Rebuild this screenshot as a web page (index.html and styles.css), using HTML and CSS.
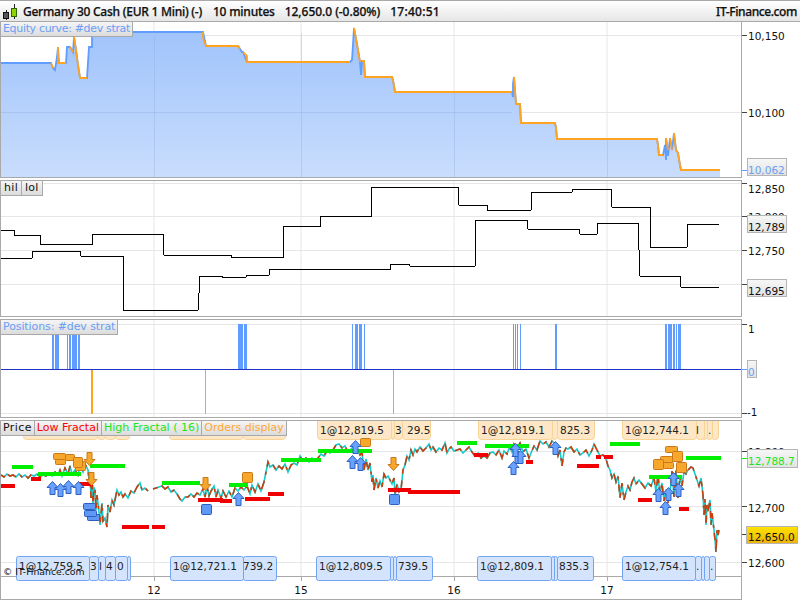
FILE: index.html
```html
<!DOCTYPE html>
<html lang="en">
<head>
<meta charset="utf-8">
<title>Germany 30 Cash</title>
<link rel="stylesheet" href="styles.css">
</head>
<body>
<div class="app">
  <header class="topbar">
    <svg class="logo" width="19" height="21" viewBox="0 0 19 21">
      <path class="logo-wick" d="M6.5 9V19M14.5 3V18"/>
      <rect class="logo-dark" x="3.5" y="11.5" width="5" height="6"/>
      <rect class="logo-green" x="11.5" y="7.5" width="5" height="8"/>
    </svg>
    <span class="instrument">Germany 30 Cash (EUR 1 Mini) (-)</span>
    <span class="period">10 minutes</span>
    <span class="quote">12,650.0 (-0.80%)</span>
    <span class="clock">17:40:51</span>
    <span class="brand">IT-Finance.com</span>
  </header>

  <section class="panel panel-equity">
    <div class="plot">
      <svg class="chart" width="740" height="155" viewBox="1 22 740 155">
        <defs>
          <linearGradient id="eqfill" x1="0" y1="0" x2="0" y2="1">
            <stop offset="0" stop-color="#9fc3fb"/>
            <stop offset="1" stop-color="#c9ddfd"/>
          </linearGradient>
          <linearGradient id="gold" x1="0" y1="0" x2="0" y2="1">
            <stop offset="0" stop-color="#ffe300"/>
            <stop offset="1" stop-color="#eeb20c"/>
          </linearGradient>
          <linearGradient id="pale" x1="0" y1="0" x2="0" y2="1">
            <stop offset="0" stop-color="#f7f7f7"/>
            <stop offset="1" stop-color="#e2e2e2"/>
          </linearGradient>
        </defs>
        <path class="grid" d="M154 22V177M301 22V177M454 22V177M607 22V177M1 35.5H741M1 112.5H741"/>
        <path class="eq-area" fill="url(#eqfill)" d="M1 63H51L53 68 55 70 57 57 58 47 59 63H66L67 47H70L73 52 74 37 76 50 78 65 80 78H87L89 47H92V37L93 32H203L206 46H238L242 52H243L247 62H350L352 60 354 28 358 50 360 62 361 75 362 61H364L365 77H392L393 80 395 92H512L513 77H514L516 104H520L521 123H555L556 128 557 139H657L658 145 659 155H663L665 145 666 160 666 138 668 156 670 138 672 150 674 133 676 150 678 153 680 165 681 170H720V177H1Z"/>
        <path class="grid-over" d="M154.5 36V177M301.5 33V177M454.5 93V177M607.5 139V177M1 112.5H512"/>
        <path class="eq-blue" d="M1 63H51L53 68 55 70 57 57 58 47 59 63H66L67 47H70L73 52 74 37 76 50 78 65 80 78H87L89 47H92V37L93 32H203L206 46H238L242 52H243L247 62H350L352 60 354 28 358 50 360 62 361 75 362 61H364L365 77H392L393 80 395 92H512L513 97V84L514 77L516 104H520L521 123H555L556 128 557 139H657L658 145 659 155H663L665 145 666 160 666 138 668 156 670 138 672 150 674 133 676 150 678 153 680 165 681 170H720"/>
        <path class="eq-orange" d="M51 63L53 68M58 47V63H66M70 47L73 52M74 37L76 50 78 65 80 78H87M203 32V38L206 46H238L240 49M243 52L247 56V62H350M354 28L358 50 360 62M362 61H364L365 77H392L393 80 395 92H512M514 77L516 104H520L521 123H555L556 128 557 139H657L658 145 659 155H663M666 138L668 150M670 138L672 150M674 133L676 150 678 153 680 165 681 170H720"/>
      </svg>
      <div class="legend"><span class="tag tag-blue tag-equity">Equity curve: #dev strat</span></div>
    </div>
    <svg class="axis" width="58" height="155" viewBox="742 22 58 155">
      <path class="tick" d="M742 35.5H747M742 112.5H747"/>
      <text class="axis-text" x="748" y="40">10,150</text>
      <text class="axis-text" x="748" y="117">10,100</text>
      <path class="tick-blue" d="M742 170.5H747"/>
      <rect class="box" fill="url(#pale)" x="747.5" y="158.5" width="39" height="17"/>
      <text class="axis-text value-blue" x="748" y="174">10,062</text>
    </svg>
  </section>

  <section class="panel panel-hl">
    <div class="plot">
      <svg class="chart" width="740" height="135" viewBox="1 181 740 135">
        <path class="grid" d="M154 181V316M301 181V316M454 181V316M607 181V316M1 183.5H741M1 216.5H741M1 250.5H741M1 284.5H741"/>
        <path class="line-black" d="M1 230H14V235H40V244H92V234H163L164 255H231V257H283V226H320V216H371V187H458L459 205H487V210H531L532 192H572L573 189H611L612 207H650L651 247H687L688 224H719"/>
        <path class="line-black" d="M1 258H32L33 251H80L81 256H123L124 310H198L200 276H222V277H246L247 275H269L270 269H390V264H409L410 266H475L476 220H527L528 229H579L580 234H597L598 223H638L640 276H680L681 287H719"/>
      </svg>
      <div class="legend"><span class="tag tag-wide">hil</span><span class="tag tag-wide">lol</span></div>
    </div>
    <svg class="axis" width="58" height="135" viewBox="742 181 58 135">
      <path class="tick" d="M742 183.5H747M742 216.5H747M742 250.5H747M742 284.5H747"/>
      <text class="axis-text" x="748" y="193">12,850</text>
      <text class="axis-text" x="748" y="221">12,800</text>
      <text class="axis-text" x="748" y="255">12,750</text>
      <rect class="box" fill="url(#pale)" x="747.5" y="215.5" width="39" height="17"/>
      <text class="axis-text" x="748" y="231">12,789</text>
      <rect class="box" fill="url(#pale)" x="747.5" y="279.5" width="39" height="17"/>
      <text class="axis-text" x="748" y="295">12,695</text>
    </svg>
  </section>

  <section class="panel panel-pos">
    <div class="plot">
      <svg class="chart" width="740" height="97" viewBox="1 320 740 97">
        <path class="grid" d="M154 320V417M301 320V417M454 320V417M607 320V417M1 324.5H741M1 413.5H741"/>
        <path class="pos-blue" d="M52 324h2v45h-2zM55 324h4v45h-4zM67 324h1v45h-1zM69 324h2v45h-2zM72 324h5v45h-5zM78 324h2v45h-2zM238 324h5v45h-5zM244 324h3v45h-3zM352 324h1v45h-1zM355 324h3v45h-3zM359 324h3v45h-3zM364 324h1v45h-1zM513 324h1v45h-1zM515 324h1v45h-1zM517 324h1v45h-1zM520 324h1v45h-1zM555 324h2v45h-2zM665 324h2v45h-2zM668 324h4v45h-4zM673 324h2v45h-2zM676 324h1v45h-1zM678 324h3v45h-3z"/>
        <path class="pos-orange" d="M91 370h2v44h-2zM205 370h1v44h-1zM393 370h1v44h-1z"/>
        <path class="zero" d="M1 369.5H741"/>
      </svg>
      <div class="legend"><span class="tag tag-blue tag-positions">Positions: #dev strat</span></div>
    </div>
    <svg class="axis" width="58" height="97" viewBox="742 320 58 97">
      <path class="tick" d="M742 324.5H747M742 413.5H747"/>
      <path class="tick-blue" d="M742 369.5H747"/>
      <text class="axis-text" x="748" y="333">1</text>
      <rect class="box" fill="url(#pale)" x="747.5" y="360.5" width="9" height="17"/>
      <text class="axis-text value-blue" x="748" y="376">0</text>
      <text class="axis-text" x="747" y="416">-1</text>
    </svg>
  </section>

  <section class="panel panel-price">
    <div class="plot">
      <svg class="chart" width="740" height="178" viewBox="1 421 740 178">
        <path class="grid" d="M154 421V576M301 421V576M454 421V576M607 421V576M1 451.5H741M1 506.5H741M1 562.5H741"/>
        <path class="axis-rule" d="M1 576.5H741M154.5 576V581M301.5 576V581M454.5 576V581M607.5 576V581"/>

        <g class="order-sell">
          <rect x="115.5" y="415.5" width="14" height="24" rx="3"/><rect x="105.5" y="415.5" width="10" height="24" rx="3"/><rect x="97.5" y="415.5" width="8" height="24" rx="3"/><rect x="23.5" y="415.5" width="74" height="24" rx="3"/>
          <rect x="169.5" y="415.5" width="74" height="24" rx="3"/><rect x="243.5" y="415.5" width="42" height="24" rx="3"/>
          <rect x="402.5" y="415.5" width="28" height="24" rx="3"/><rect x="394.5" y="415.5" width="8" height="24" rx="3"/><rect x="391.5" y="415.5" width="3" height="24" rx="3"/><rect x="317.5" y="415.5" width="74" height="24" rx="3"/>
          <rect x="557.5" y="415.5" width="37" height="24" rx="3"/><rect x="551.5" y="415.5" width="6" height="24" rx="3"/><rect x="478.5" y="415.5" width="74" height="24" rx="3"/>
          <rect x="711.5" y="415.5" width="7" height="24" rx="3"/><rect x="706.5" y="415.5" width="6" height="24" rx="3"/><rect x="701.5" y="415.5" width="6" height="24" rx="3"/><rect x="696.5" y="415.5" width="8" height="24" rx="3"/><rect x="622.5" y="415.5" width="74" height="24" rx="3"/>
        </g>
        <text class="order-text" x="320" y="434">1@12,819.5</text>
        <text class="order-text" x="395" y="434">3</text>
        <text class="order-text" x="407" y="434">29.5</text>
        <text class="order-text" x="481" y="434">1@12,819.1</text>
        <text class="order-text" x="560" y="434">825.3</text>
        <text class="order-text" x="625" y="434">1@12,744.1</text>
        <text class="order-text" x="696" y="434">l</text>
        <text class="order-text" x="708" y="434">.</text>

        <g class="order-buy">
          <rect x="127.5" y="556.5" width="3" height="24" rx="2"/><rect x="115.5" y="556.5" width="12" height="24" rx="2"/><rect x="105.5" y="556.5" width="10" height="24" rx="2"/><rect x="98.5" y="556.5" width="7" height="24" rx="2"/><rect x="89.5" y="556.5" width="9" height="24" rx="2"/><rect x="16.5" y="556.5" width="73" height="24" rx="2"/>
          <rect x="170.5" y="556.5" width="73" height="24" rx="2"/><rect x="243.5" y="556.5" width="33" height="24" rx="2"/>
          <rect x="396.5" y="556.5" width="36" height="24" rx="2"/><rect x="393.5" y="556.5" width="3" height="24" rx="2"/><rect x="390.5" y="556.5" width="3" height="24" rx="2"/><rect x="316.5" y="556.5" width="74" height="24" rx="2"/>
          <rect x="557.5" y="556.5" width="36" height="24" rx="2"/><rect x="553.5" y="556.5" width="4" height="24" rx="2"/><rect x="551.5" y="556.5" width="3" height="24" rx="2"/><rect x="477.5" y="556.5" width="74" height="24" rx="2"/>
          <rect x="709.5" y="556.5" width="6" height="24" rx="2"/><rect x="704.5" y="556.5" width="5" height="24" rx="2"/><rect x="701.5" y="556.5" width="3" height="24" rx="2"/><rect x="695.5" y="556.5" width="6" height="24" rx="2"/><rect x="622.5" y="556.5" width="73" height="24" rx="2"/>
        </g>
        <text class="order-text" x="19" y="570">1@12,759.5</text>
        <text class="order-text" x="90" y="570">3</text>
        <text class="order-text" x="99" y="570">l</text>
        <text class="order-text" x="106" y="570">4</text>
        <text class="order-text" x="117" y="570">0</text>
        <text class="order-text" x="173" y="570">1@12,721.1</text>
        <text class="order-text" x="243" y="570">739.2</text>
        <text class="order-text" x="319" y="570">1@12,809.5</text>
        <text class="order-text" x="398" y="570">739.5</text>
        <text class="order-text" x="480" y="570">1@12,809.1</text>
        <text class="order-text" x="559" y="570">835.3</text>
        <text class="order-text" x="625" y="570">1@12,754.1</text>
        <text class="order-text" x="696" y="570">.</text>
        <text class="order-text" x="710" y="570">.</text>

        <path class="price-teal" d="M1 475 4 477 7 474 10 476 13 475 16 477 19 474 22 477 25 475 28 478 31 475 34 476 37 474 40 477 43 475 46 476 49 473 52 476 55 472 58 475 60 470 62 476 65 468 68 474 70 466 72 474 75 470 78 475 80 466 83 472 85 464 88 470 89 480 90 474 91 498 92 482 93 503 94 488 95 490 96 510 97 495 99 512 100 525 102 503 103 521 105 518 107 527 108 505 110 512 112 500 114 505 117 490 119 495 121 492 123 497 125 494 128 498 131 491 134 493 137 487 140 483 142 490 145 488 148 491 M153 489 156 488 159 487 162 486 165 489 168 487 171 492 174 490 177 494 180 499 182 501 185 497 188 497 191 494 194 497 197 493 200 495 203 489 205 497 207 486 209 496 211 491 214 486 216 497 218 490 221 498 223 491 226 497 229 491 232 497 235 488 238 491 241 487 244 490 247 486 250 494 252 485 255 492 258 484 261 491 264 482 266 472 268 462 270 467 273 465 276 470 279 466 282 469 285 464 288 472 291 465 294 463 297 465 300 456 303 461 306 458 309 462 312 458 315 461 318 458 321 454 324 456 327 451 330 453 333 450 336 445 339 444 342 448 345 446 348 452 351 449 354 446 357 450 360 455 362 452 364 470 366 459 368 470 370 463 372 482 373 475 374 490 376 478 378 488 380 481 382 487 384 474 386 478 388 476 390 480 392 484 394 478 395 495 397 484 399 492 401 490 403 470 405 465 407 456 409 460 411 450 413 455 415 449 417 452 420 447 423 451 426 448 429 444 431 450 433 447 436 452 439 448 442 450 445 443 447 453 449 449 451 447 454 451 457 450 460 449 463 453 466 450 469 447 472 452 475 456 478 453 481 458 484 456 487 458 490 453 493 452 496 455 499 450 502 458 504 451 507 454 510 446 512 452 514 444 517 448 520 443 523 452 526 449 529 458 531 453 534 446 537 450 540 441 543 444 546 442 549 447 552 441 555 444 558 456 560 450 562 466 564 452 566 448 568 449 571 447 574 452 577 449 580 455 583 453 586 450 589 456 592 450 594 444 597 450 600 456 603 455 606 459 608 466 610 470 612 478 614 474 616 482 618 476 620 498 622 483 624 500 626 492 628 486 630 490 632 482 634 478 636 484 639 480 642 484 645 488 648 483 651 486 654 478 656 492 658 475 660 495 662 483 664 501 666 490 668 503 670 493 672 471 674 497 676 470 678 498 680 476 682 486 684 472 686 474 688 470 691 467 693 468 695 474 697 480 699 486 701 478 703 495 704 515 705 499 706 525 707 505 708 511 710 500 711 525 712 513 714 530 715 540 716 552 717 530 718 535 719 530"/>
        <path class="price-red" d="M1 475 4 477 7 474 10 476 13 475 16 477 19 474 22 477 25 475 28 478 31 475 34 476 37 474 40 477 43 475 46 476 49 473 52 476 55 472 58 475 60 470 62 476 65 468 68 474 70 466 72 474 75 470 78 475 80 466 83 472 85 464 88 470 89 480 90 474 91 498 92 482 93 503 94 488 95 490 96 510 97 495 99 512 100 525 102 503 103 521 105 518 107 527 108 505 110 512 112 500 114 505 117 490 119 495 121 492 123 497 125 494 128 498 131 491 134 493 137 487 140 483 142 490 145 488 148 491 M153 489 156 488 159 487 162 486 165 489 168 487 171 492 174 490 177 494 180 499 182 501 185 497 188 497 191 494 194 497 197 493 200 495 203 489 205 497 207 486 209 496 211 491 214 486 216 497 218 490 221 498 223 491 226 497 229 491 232 497 235 488 238 491 241 487 244 490 247 486 250 494 252 485 255 492 258 484 261 491 264 482 266 472 268 462 270 467 273 465 276 470 279 466 282 469 285 464 288 472 291 465 294 463 297 465 300 456 303 461 306 458 309 462 312 458 315 461 318 458 321 454 324 456 327 451 330 453 333 450 336 445 339 444 342 448 345 446 348 452 351 449 354 446 357 450 360 455 362 452 364 470 366 459 368 470 370 463 372 482 373 475 374 490 376 478 378 488 380 481 382 487 384 474 386 478 388 476 390 480 392 484 394 478 395 495 397 484 399 492 401 490 403 470 405 465 407 456 409 460 411 450 413 455 415 449 417 452 420 447 423 451 426 448 429 444 431 450 433 447 436 452 439 448 442 450 445 443 447 453 449 449 451 447 454 451 457 450 460 449 463 453 466 450 469 447 472 452 475 456 478 453 481 458 484 456 487 458 490 453 493 452 496 455 499 450 502 458 504 451 507 454 510 446 512 452 514 444 517 448 520 443 523 452 526 449 529 458 531 453 534 446 537 450 540 441 543 444 546 442 549 447 552 441 555 444 558 456 560 450 562 466 564 452 566 448 568 449 571 447 574 452 577 449 580 455 583 453 586 450 589 456 592 450 594 444 597 450 600 456 603 455 606 459 608 466 610 470 612 478 614 474 616 482 618 476 620 498 622 483 624 500 626 492 628 486 630 490 632 482 634 478 636 484 639 480 642 484 645 488 648 483 651 486 654 478 656 492 658 475 660 495 662 483 664 501 666 490 668 503 670 493 672 471 674 497 676 470 678 498 680 476 682 486 684 472 686 474 688 470 691 467 693 468 695 474 697 480 699 486 701 478 703 495 704 515 705 499 706 525 707 505 708 511 710 500 711 525 712 513 714 530 715 540 716 552 717 530 718 535 719 530"/>

        <g class="bar-green">
          <rect x="12" y="465" width="21" height="4"/><rect x="38" y="472" width="43" height="4"/><rect x="90" y="464" width="35" height="4"/><rect x="162" y="481" width="38" height="4"/><rect x="229" y="483" width="19" height="4"/><rect x="281" y="458" width="40" height="4"/><rect x="318" y="449" width="54" height="4"/><rect x="457" y="441" width="20" height="4"/><rect x="485" y="444" width="44" height="4"/><rect x="610" y="442" width="30" height="4"/><rect x="649" y="475" width="33" height="4"/><rect x="686" y="456" width="35" height="4"/>
        </g>
        <g class="bar-red">
          <rect x="1" y="484" width="14" height="4"/><rect x="31" y="477" width="10" height="4"/><rect x="79" y="482" width="14" height="4"/><rect x="122" y="525" width="27" height="4"/><rect x="152" y="525" width="13" height="4"/><rect x="198" y="498" width="25" height="4"/><rect x="220" y="499" width="12" height="4"/><rect x="245" y="497" width="25" height="4"/><rect x="268" y="492" width="16" height="4"/><rect x="388" y="488" width="23" height="4"/><rect x="408" y="490" width="52" height="4"/><rect x="474" y="453" width="14" height="4"/><rect x="526" y="460" width="7" height="4"/><rect x="577" y="464" width="22" height="4"/><rect x="596" y="455" width="5" height="4"/><rect x="604" y="455" width="9" height="4"/><rect x="638" y="498" width="14" height="4"/><rect x="679" y="507" width="10" height="4"/>
        </g>

        <g class="sq-orange">
          <rect x="53.5" y="453.5" width="12" height="6" rx="1"/><rect x="55.5" y="459.5" width="10" height="5" rx="1"/><rect x="65.5" y="454.5" width="9" height="6" rx="1"/><rect x="75.5" y="461.5" width="10" height="9" rx="1"/><rect x="73.5" y="457.5" width="9" height="10" rx="1"/><rect x="242.5" y="472.5" width="10" height="10" rx="1"/><rect x="360.5" y="438.5" width="10" height="8" rx="1"/><rect x="665.5" y="446.5" width="12" height="6" rx="1"/><rect x="660.5" y="456.5" width="12" height="6" rx="1"/><rect x="663.5" y="462.5" width="10" height="6" rx="1"/><rect x="653.5" y="459.5" width="10" height="10" rx="1"/><rect x="672.5" y="451.5" width="10" height="10" rx="1"/><rect x="676.5" y="462.5" width="10" height="10" rx="1"/>
        </g>
        <g class="sq-blue">
          <rect x="83.5" y="503.5" width="12" height="6" rx="1"/><rect x="87.5" y="514.5" width="12" height="6" rx="1"/><rect x="84.5" y="510.5" width="12" height="6" rx="1"/><rect x="201.5" y="504.5" width="10" height="10" rx="1"/><rect x="389.5" y="494.5" width="10" height="10" rx="1"/>
        </g>

        <defs>
          <path id="up" d="M0 0L5.5 6H2.5V13H-2.5V6H-5.5Z"/>
          <path id="down" d="M0 0L5.5 -6H2.5V-13H-2.5V-6H-5.5Z"/>
        </defs>
        <g class="arrow-up">
          <use href="#up" x="52.5" y="481.5"/><use href="#up" x="60.5" y="483.5"/><use href="#up" x="68.5" y="480.5"/><use href="#up" x="78.5" y="481.5"/><use href="#up" x="238.5" y="492.5"/><use href="#up" x="355.5" y="440.5"/><use href="#up" x="352.5" y="455.5"/><use href="#up" x="360.5" y="457.5"/><use href="#up" x="517.5" y="450.5"/><use href="#up" x="520.5" y="450.5"/><use href="#up" x="515.5" y="443.5"/><use href="#up" x="513.5" y="461.5"/><use href="#up" x="555.5" y="441.5"/><use href="#up" x="658.5" y="488.5"/><use href="#up" x="668.5" y="487.5"/><use href="#up" x="673.5" y="472.5"/><use href="#up" x="678.5" y="483.5"/><use href="#up" x="665.5" y="501.5"/>
        </g>
        <g class="arrow-down">
          <use href="#down" x="89.5" y="465.5"/><use href="#down" x="91.5" y="485.5"/><use href="#down" x="205.5" y="490.5"/><use href="#down" x="393.5" y="470.5"/>
        </g>

        <text class="copyright" x="3" y="575">© IT-Finance.com</text>
        <text class="axis-text time" x="154" y="594">12</text>
        <text class="axis-text time" x="301" y="594">15</text>
        <text class="axis-text time" x="454" y="594">16</text>
        <text class="axis-text time" x="607" y="594">17</text>
      </svg>
      <div class="legend">
        <span class="tag tag-price">Price</span><span class="tag tag-red">Low Fractal</span><span class="tag tag-green">High Fractal ( 16)</span><span class="tag tag-orange">Orders display</span>
      </div>
    </div>
    <svg class="axis" width="58" height="178" viewBox="742 421 58 178">
      <path class="tick" d="M742 451.5H747M742 506.5H747M742 562.5H747M742 534.5H747"/>
      <path class="tick-green" d="M742 458.5H747"/>
      <text class="axis-text" x="748" y="456">12,800</text>
      <rect class="box" fill="url(#pale)" x="747.5" y="449.5" width="50" height="18"/>
      <text class="axis-text value-green" x="748" y="465">12,788.7</text>
      <text class="axis-text" x="748" y="512">12,700</text>
      <rect class="box" fill="url(#gold)" x="746.5" y="526.5" width="51" height="17"/>
      <text class="axis-text" x="748" y="541">12,650.0</text>
      <text class="axis-text" x="748" y="567">12,600</text>
    </svg>
  </section>
</div>
</body>
</html>
```
FILE: styles.css
```css
html, body {
  margin: 0;
  padding: 0;
  background: #fff;
}
.app {
  width: 800px;
  height: 600px;
  overflow: hidden;
  display: flex;
  flex-direction: column;
  font-family: "DejaVu Sans", sans-serif;
  color: #111;
}
.topbar {
  height: 20px;
  flex: none;
  display: flex;
  align-items: center;
  border-top: 1px solid #a9a9a9;
  border-bottom: 1px solid #a9a9a9;
  background: linear-gradient(#ffffff, #e6e6e6);
  font-family: "Noto Sans", sans-serif;
  font-size: 12px;
  font-weight: 500;
  white-space: nowrap;
  -webkit-text-stroke: 0.25px #111;
}
.logo { flex: none; margin: 0 4px 0 0; }
.logo-wick { stroke: #222; stroke-width: 1; fill: none; }
.logo-dark { fill: #555; stroke: #111; }
.logo-green { fill: #8fd400; stroke: #2d6a00; }
.instrument { margin-right: 11px; letter-spacing: -0.25px; }
.period { margin-right: 10px; letter-spacing: -0.2px; }
.quote { margin-right: 10px; letter-spacing: -0.05px; }
.clock { letter-spacing: 0.25px; }
.brand { margin-left: auto; margin-right: 3px; letter-spacing: -0.4px; }

.panel {
  flex: none;
  display: flex;
  align-items: flex-start;
}
.plot {
  position: relative;
  flex: none;
  width: 740px;
  border-left: 1px solid #a9a9a9;
  border-right: 1px solid #a9a9a9;
  border-bottom: 1px solid #a9a9a9;
}
.panel-equity .plot { height: 155px; }
.panel-hl { margin-top: 2px; }
.panel-hl .plot { height: 135px; border-top: 1px solid #a9a9a9; }
.panel-pos { margin-top: 2px; }
.panel-pos .plot { height: 97px; border-top: 1px solid #a9a9a9; }
.panel-price { margin-top: 2px; }
.panel-price .plot { height: 178px; border-top: 1px solid #a9a9a9; }
.chart, .axis { display: block; flex: none; }
.panel-hl .axis, .panel-pos .axis, .panel-price .axis { margin-top: 1px; }

.legend {
  position: absolute;
  left: 0;
  top: 0;
  display: flex;
  font-size: 11px;
}
.tag {
  height: 14px;
  line-height: 14px;
  padding: 0 2px;
  border-right: 1px solid #a9a9a9;
  border-bottom: 1px solid #a9a9a9;
  background: linear-gradient(#f5f5f5, #dcdcdc);
  color: #111;
  white-space: nowrap;
}
.tag-wide { padding: 0 3px; letter-spacing: 0.3px; }
.tag-price { letter-spacing: 0.4px; }
.tag-equity { letter-spacing: -0.33px; }
.tag-positions { letter-spacing: -0.1px; }
.tag-blue { color: #6a9ff5; }
.tag-red { color: #f00; }
.tag-green { color: #19e619; }
.tag-orange { color: #ffa733; }

.grid { stroke: #e6e6e6; stroke-width: 1; fill: none; }
.grid-over { stroke: #90a9d8; stroke-opacity: 0.35; stroke-width: 1; fill: none; }
.eq-area { stroke: none; }
.eq-blue { stroke: #619cff; stroke-width: 1.8; fill: none; }
.eq-orange { stroke: #ffa321; stroke-width: 1.8; fill: none; }
.line-black { stroke: #000; stroke-width: 1; fill: none; shape-rendering: crispEdges; }
.pos-blue { fill: #619cff; shape-rendering: crispEdges; }
.pos-orange { fill: #ffa321; shape-rendering: crispEdges; }
.zero { stroke: #2233cc; stroke-width: 1; }
.axis-rule { stroke: #a9a9a9; stroke-width: 1; fill: none; }

.order-sell rect { fill: #fde7c6; stroke: #f9d394; stroke-width: 1; }
.order-buy rect { fill: #d4e4fc; stroke: #72a4f5; stroke-width: 1; }
.order-text { font-size: 10.5px; fill: #222; }

.price-teal { fill: none; stroke: #12cccc; stroke-width: 1.6; }
.price-red { fill: none; stroke: #cc3d0c; stroke-width: 1.6; stroke-dasharray: 5 4 9 6 3 5 7 7; }
.bar-green rect { fill: #00ee00; }
.bar-red rect { fill: #f00000; }
.sq-orange rect { fill: #f7a72c; stroke: #c9781a; stroke-width: 1; }
.sq-blue rect { fill: #5f98f5; stroke: #2c5fc0; stroke-width: 1; }
.arrow-up { fill: #6aa3ff; stroke: #2c5fc0; stroke-width: 1; }
.arrow-down { fill: #f7a72c; stroke: #c9781a; stroke-width: 1; }
.copyright { font-size: 9.3px; fill: #111; }

.axis-text { font-size: 10.5px; fill: #111; }
.time { text-anchor: middle; }
.tick { stroke: #444; stroke-width: 1; fill: none; }
.tick-blue { stroke: #619cff; stroke-width: 1; fill: none; }
.tick-green { stroke: #19e619; stroke-width: 1; fill: none; }
.box { stroke: #b5b5b5; stroke-width: 1; }
.value-blue { fill: #6a9ff5; }
.value-green { fill: #19e619; }
```
